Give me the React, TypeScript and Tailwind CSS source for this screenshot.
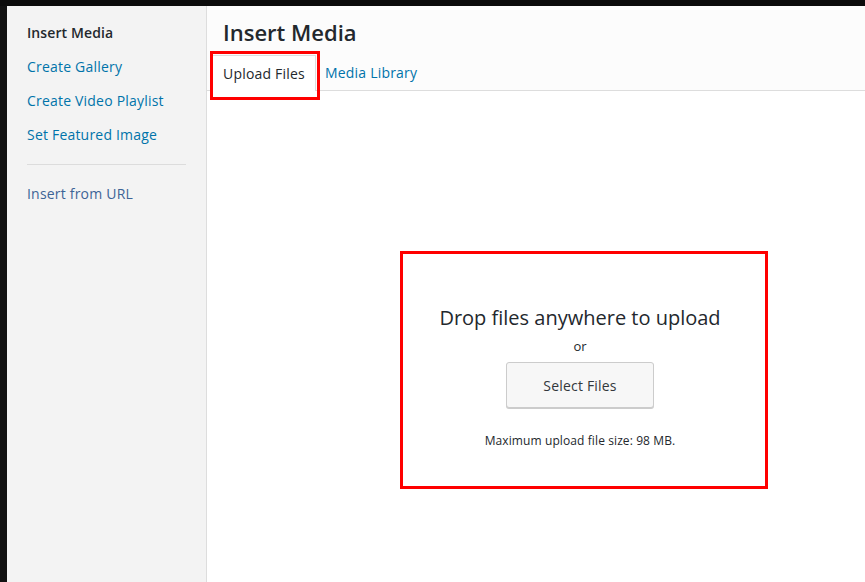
import React from 'react';

const menu = [
  { label: 'Insert Media', active: true },
  { label: 'Create Gallery' },
  { label: 'Create Video Playlist' },
  { label: 'Set Featured Image' },
];

export default function App() {
  return (
    <div
      className="flex h-[582px] w-[865px] flex-col overflow-hidden bg-[#0b0b0b]"
      style={{ fontFamily: '"Open Sans", "Noto Sans", Arial, sans-serif' }}
    >
      <div className="h-[6px] shrink-0 bg-[#0b0b0b]" />
      <div className="flex min-h-0 flex-1">
        <div className="w-[7px] shrink-0 bg-[#111]" />

        {/* sidebar menu */}
        <aside className="w-[200px] shrink-0 border-r border-[#dddddd] bg-[#f3f3f3] px-5 pt-[10px]">
          {menu.map((item) => (
            <div
              key={item.label}
              className={
                item.active
                  ? 'h-[34px] text-[14px] font-semibold leading-[34px] tracking-[0.1px] text-[#23282d]'
                  : 'h-[34px] text-[14px] leading-[34px] tracking-[0.2px] text-[#0073aa]'
              }
            >
              {item.label}
            </div>
          ))}
          <div className="my-3 h-px bg-[#dcdcdc]" />
          <div className="h-[34px] text-[14px] leading-[34px] tracking-[0.2px] text-[#3d6496]">
            Insert from URL
          </div>
        </aside>

        <main className="flex min-w-0 flex-1 flex-col bg-white">
          <header className="relative shrink-0 border-b border-[#dddddd] bg-[#fcfcfc]">
            <h1 className="px-4 pt-[12px] text-[22px] font-semibold leading-[28px] text-[#23282d]">
              Insert Media
            </h1>
            <nav className="mt-[9px] flex h-[35px] items-end px-[5px] tracking-[0.2px]">
              <div className="-mb-px flex h-[36px] w-[104px] items-center border border-b-0 border-[#dddddd] bg-white px-[10px] text-[14px] text-[#23282d]">
                Upload Files
              </div>
              <div className="flex h-[35px] items-center px-[9px] text-[14px] text-[#0073aa]">
                Media Library
              </div>
            </nav>
            <div className="pointer-events-none absolute left-[3px] top-[45px] h-[49px] w-[110px] border-[3px] border-[#ff0000]" />
          </header>

          <section className="flex-1 pl-[193px] pt-[160px]">
            <div className="h-[238px] w-[368px] border-[3px] border-[#ff0000]">
              <div className="flex flex-col items-center pr-[8px] pt-[50px] text-[#23282d]">
                <p className="text-[20px] leading-[28px]">Drop files anywhere to upload</p>
                <p className="mt-[5px] text-[13px] leading-[18px]">or</p>
                <button className="mt-[7px] h-[46px] w-[148px] rounded-[3px] border border-[#cccccc] bg-[#f7f7f7] text-[14px] tracking-[0.2px] text-[#32373c] shadow-[0_1px_0_#cccccc]">
                  Select Files
                </button>
                <p className="mt-[25px] text-[12px] leading-[16px] tracking-[0.1px]">
                  Maximum upload file size: 98 MB.
                </p>
              </div>
            </div>
          </section>
        </main>
      </div>
    </div>
  );
}
